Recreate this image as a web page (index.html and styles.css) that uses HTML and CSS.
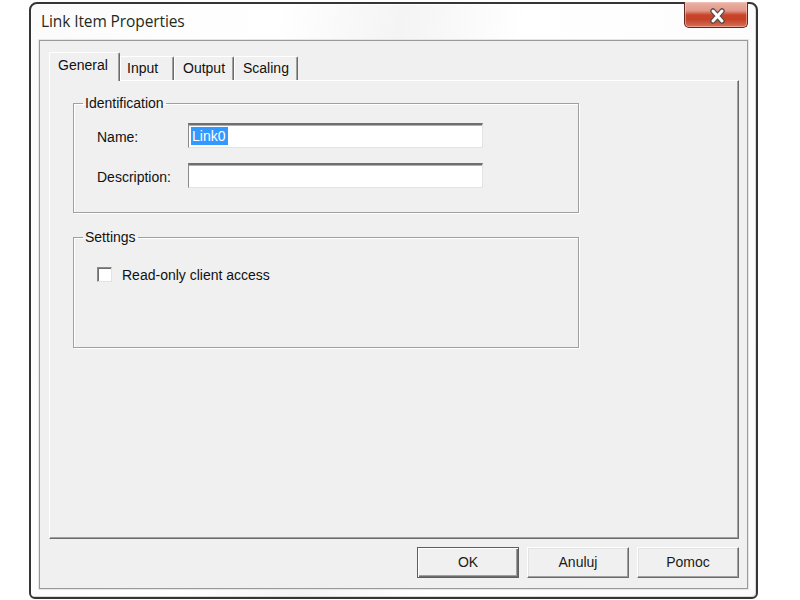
FILE: index.html
```html
<!DOCTYPE html>
<html>
<head>
<meta charset="utf-8">
<link rel="stylesheet" href="styles.css">
</head>
<body>
<div class="window">
  <div class="titlebar">
    <div class="title">Link Item Properties</div>
    <div class="close">
      <svg width="64" height="25" viewBox="0 0 64 25">
        <path d="M28 9 L37 19 M37 9 L28 19" stroke="#5a4a48" stroke-width="5.5" stroke-linecap="round" fill="none"/>
        <path d="M28 9 L37 19 M37 9 L28 19" stroke="#ffffff" stroke-width="3" stroke-linecap="round" fill="none"/>
      </svg>
    </div>
  </div>
  <div class="client">
    <div class="tabs">
      <div class="tab tab-active tab-general">General</div>
      <div class="tab tab-input">Input</div>
      <div class="tab tab-output">Output</div>
      <div class="tab tab-scaling">Scaling</div>
    </div>
    <div class="panel">
      <fieldset class="group group-ident">
        <legend>Identification</legend>
        <div class="form">
          <label class="lbl">Name:</label>
          <div class="field"><span class="sel">Link0</span></div>
          <label class="lbl">Description:</label>
          <div class="field"></div>
        </div>
      </fieldset>
      <fieldset class="group group-settings">
        <legend>Settings</legend>
        <div class="check-row">
          <span class="checkbox"></span>
          <span class="check-label">Read-only client access</span>
        </div>
      </fieldset>
    </div>
    <div class="buttons">
      <div class="btn btn-default">OK</div>
      <div class="btn">Anuluj</div>
      <div class="btn">Pomoc</div>
    </div>
  </div>
</div>
</body>
</html>
```
FILE: styles.css
```css
html, body {
  margin: 0;
  padding: 0;
  background: #ffffff;
}
body {
  font-family: "Liberation Sans", Arial, sans-serif;
  font-size: 14px;
  color: #111;
}
.window {
  box-sizing: border-box;
  margin: 2px 0 0 29px;
  width: 729px;
  height: 597px;
  border: 2px solid #353535;
  border-radius: 8px 8px 6px 6px;
  background: linear-gradient(100deg, #fbfbfb 0%, #ffffff 30%, #f4f4f4 45%, #ffffff 60%, #fbfbfb 100%);
  padding: 0 8px 8px 8px;
  display: flex;
  flex-direction: column;
  box-shadow: inset 1px 1px 0 #ffffff, inset -1px -1px 0 #d8d8d8;
}
.titlebar {
  height: 36px;
  display: flex;
  justify-content: space-between;
  align-items: flex-start;
}
.title {
  font-family: "Open Sans", "Liberation Sans", sans-serif;
  font-size: 15.5px;
  color: #1f2a22;
  padding: 6px 0 0 2px;
  letter-spacing: -0.1px;
}
.close {
  margin-top: -2px;
  width: 64px;
  height: 26px;
  box-sizing: border-box;
  border: 1px solid #5f2a20;
  border-top: none;
  border-radius: 0 0 5px 5px;
  background: linear-gradient(#eab3a6 0%, #e19888 35%, #c9432a 52%, #c44227 70%, #d8705a 100%);
  box-shadow: inset 0 0 0 1px rgba(255, 210, 200, 0.5);
}
.close svg {
  display: block;
}
.client {
  flex: 1;
  border: 1px solid #9a9a9a;
  background: #f0f0f0;
  padding: 11px 8px 10px 9px;
  display: flex;
  flex-direction: column;
  box-shadow: 0 0 0 1px #e6e6e6;
}
.tabs {
  height: 28px;
  display: flex;
  align-items: flex-end;
}
.tab {
  box-sizing: border-box;
  height: 24px;
  line-height: 22px;
  padding-left: 7px;
  border-top: 1px solid #ffffff;
  border-left: 1px solid #ffffff;
  border-right: 1px solid #6b6b6b;
  box-shadow: inset -1px 0 0 #a0a0a0;
  border-radius: 2px 2px 0 0;
}
.tab-active {
  line-height: 24px;
  position: relative;
  z-index: 1;
  margin-bottom: -1px;
  background: #f0f0f0;
  height: 29px;
}
.tab-general { width: 71px; padding-left: 8px; }
.tab-input { width: 54px; padding-left: 6px; }
.tab-output { width: 60px; padding-left: 8px; }
.tab-scaling { width: 64px; padding-left: 8px; }
.panel {
  flex: 1;
  border-top: 1px solid #ffffff;
  border-left: 1px solid #ffffff;
  border-right: 1px solid #6b6b6b;
  border-bottom: 1px solid #6b6b6b;
  box-shadow: inset -1px -1px 0 #a0a0a0;
  padding: 14px 0 0 23px;
}
.group {
  margin: 0;
  width: 506px;
  box-sizing: border-box;
  border: 1px solid #a0a0a0;
  box-shadow: 1px 1px 0 #ffffff, inset 1px 1px 0 #ffffff;
  padding: 0;
  min-width: 0;
}
.group legend {
  margin-left: -14px;
  padding: 0 2px;
  line-height: 16px;
  color: #111;
}
.group-ident {
  padding: 12px 0 24px 23px;
}
.group-settings {
  margin-top: 16px;
  padding: 20px 0 64px 23px;
}
.form {
  display: grid;
  grid-template-columns: 91px 295px;
  grid-auto-rows: 25px;
  row-gap: 15px;
  align-items: center;
}
.lbl {
  color: #111;
  padding-top: 3px;
}
.field {
  box-sizing: border-box;
  height: 25px;
  background: #ffffff;
  border-top: 2px solid #6f6f6f;
  border-left: 1px solid #8a8a8a;
  border-right: 1px solid #e3e3e3;
  border-bottom: 1px solid #e3e3e3;
  box-shadow: inset 0 1px 0 #b0b0b0;
  padding: 2px 0 0 2px;
  line-height: 18px;
}
.sel {
  display: inline-block;
  background: #3399ff;
  color: #ffffff;
  padding: 0 3px 0 1px;
  height: 18px;
}
.check-row {
  display: flex;
  align-items: center;
  height: 18px;
}
.checkbox {
  box-sizing: border-box;
  width: 15px;
  height: 15px;
  background: #ffffff;
  border-top: 1px solid #8a8a8a;
  border-left: 1px solid #8a8a8a;
  border-right: 1px solid #e3e3e3;
  border-bottom: 1px solid #e3e3e3;
  box-shadow: inset 1px 1px 0 #6f6f6f;
  margin-right: 10px;
}
.check-label {
  padding-top: 2px;
}
.buttons {
  margin-top: 8px;
  display: flex;
  justify-content: flex-end;
  gap: 8px;
}
.btn {
  box-sizing: border-box;
  width: 102px;
  height: 31px;
  line-height: 29px;
  text-align: center;
  background: #f0f0f0;
  border-top: 1px solid #ffffff;
  border-left: 1px solid #ffffff;
  border-right: 1px solid #6b6b6b;
  border-bottom: 1px solid #6b6b6b;
  box-shadow: inset -1px -1px 0 #a0a0a0, inset 1px 1px 0 #e3e3e3;
  color: #1a1a1a;
}
.btn-default {
  border: 1px solid #5e5e5e;
  box-shadow: inset 1px 1px 0 #ffffff, inset -1px -1px 0 #6b6b6b, inset -2px -2px 0 #a0a0a0;
}
```
